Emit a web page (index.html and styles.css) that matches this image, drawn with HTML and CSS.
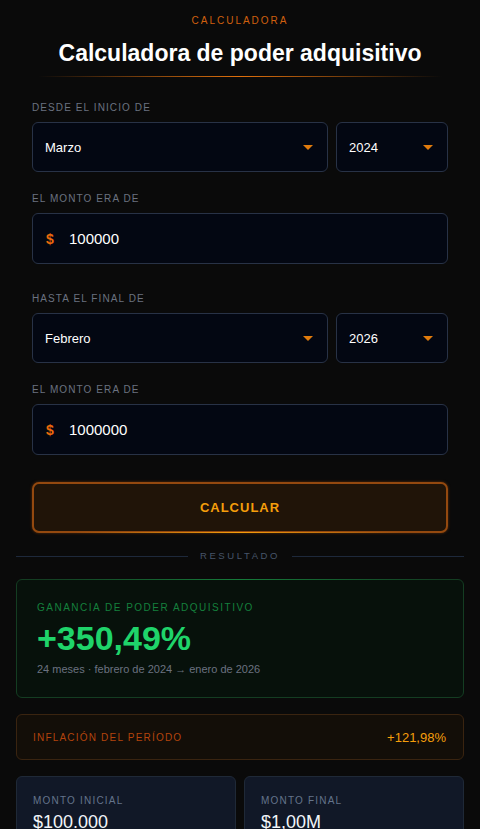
FILE: index.html
```html
<!DOCTYPE html>
<html lang="es">
<head>
  <meta charset="UTF-8">
  <meta name="viewport" content="width=device-width, initial-scale=1">
  <title>Calculadora de poder adquisitivo</title>
  <link rel="stylesheet" href="styles.css">
</head>
<body>
  <div class="page">
    <header class="head">
      <div class="tag">Calculadora</div>
      <h1>Calculadora de poder adquisitivo</h1>
      <div class="head-line"></div>
    </header>

    <form class="calc" onsubmit="return false">
      <div class="field">
        <label>Desde el inicio de</label>
        <div class="date-row">
          <div class="select month">
            <select>
              <option>Enero</option><option>Febrero</option><option selected>Marzo</option>
            </select>
          </div>
          <div class="select year">
            <select>
              <option>2023</option><option selected>2024</option><option>2025</option>
            </select>
          </div>
        </div>
      </div>
      <div class="field">
        <label>El monto era de</label>
        <div class="money">
          <span class="cur">$</span>
          <input type="text" value="100000">
        </div>
      </div>

      <div class="field section">
        <label>Hasta el final de</label>
        <div class="date-row">
          <div class="select month">
            <select>
              <option>Enero</option><option selected>Febrero</option><option>Marzo</option>
            </select>
          </div>
          <div class="select year">
            <select>
              <option>2025</option><option selected>2026</option>
            </select>
          </div>
        </div>
      </div>
      <div class="field">
        <label>El monto era de</label>
        <div class="money">
          <span class="cur">$</span>
          <input type="text" value="1000000">
        </div>
      </div>

      <button class="btn-calc" type="button">Calcular</button>
    </form>

    <div class="divider"><span>Resultado</span></div>

    <section class="results">
      <div class="card gain">
        <div class="gain-label">Ganancia de poder adquisitivo</div>
        <div class="gain-value">+350,49%</div>
        <div class="gain-sub">24 meses · febrero de 2024 → enero de 2026</div>
      </div>

      <div class="card infl">
        <span class="infl-label">Inflación del período</span>
        <span class="infl-value">+121,98%</span>
      </div>

      <div class="amounts">
        <div class="card amount">
          <div class="amount-label">Monto inicial</div>
          <div class="amount-value">$100.000</div>
        </div>
        <div class="card amount">
          <div class="amount-label">Monto final</div>
          <div class="amount-value">$1,00M</div>
        </div>
      </div>
    </section>
  </div>
</body>
</html>
```

FILE: styles.css
```css
/* base */
body {
  margin: 0;
  background: #0a0a0a;
  color: #f1f5f9;
  font-family: "Liberation Sans", Arial, sans-serif;
}
.page {
  padding: 15px 16px 0;
}

/* cabecera */
.head {
  text-align: center;
}
.tag {
  font-size: 10px;
  line-height: 12px;
  letter-spacing: 2px;
  text-transform: uppercase;
  color: #d0600e;
}
.head h1 {
  margin: 12px 0 0;
  font-size: 23px;
  line-height: 28px;
  font-weight: bold;
  color: #fff;
}
.head-line {
  height: 1px;
  margin: 9px 22px 0;
  background: linear-gradient(90deg, transparent, #e0700c 50%, transparent);
}

/* formulario */
.calc {
  padding: 25px 16px 0;
}
.field {
  margin-bottom: 21px;
}
.field.section {
  margin-top: 29px;
}
.field label {
  display: block;
  font-size: 10px;
  line-height: 12px;
  letter-spacing: 1.1px;
  text-transform: uppercase;
  color: #6b7280;
  margin-bottom: 8px;
}
.date-row {
  display: flex;
  gap: 8px;
}
.select {
  position: relative;
}
.select.month { flex: 1; }
.select.year { width: 112px; }
.select::after {
  content: "";
  position: absolute;
  right: 15px;
  top: 23px;
  border-left: 5px solid transparent;
  border-right: 5px solid transparent;
  border-top: 5px solid #e07b0c;
}
.select select {
  appearance: none;
  -webkit-appearance: none;
  width: 100%;
  height: 50px;
  padding: 0 12px;
  background: #030712;
  border: 1px solid #283246;
  border-radius: 6px;
  color: #fff;
  font-family: inherit;
  font-size: 13px;
}
.money {
  display: flex;
  align-items: center;
  height: 49px;
  padding: 0 13px;
  background: #030712;
  border: 1px solid #283246;
  border-radius: 6px;
}
.cur {
  color: #ea6a0c;
  font-size: 14px;
  font-weight: bold;
  width: 23px;
}
.money input {
  flex: 1;
  background: none;
  border: none;
  outline: none;
  color: #fff;
  font-family: inherit;
  font-size: 15px;
  padding: 0;
}
.btn-calc {
  position: relative;
  display: block;
  width: 100%;
  height: 51px;
  margin-top: 27px;
  background: #201408;
  border: 2px solid #94490f;
  border-radius: 7px;
  box-shadow: 0 0 3px rgba(180, 83, 9, .5);
  color: #f59e0b;
  font-family: inherit;
  font-size: 13px;
  font-weight: bold;
  letter-spacing: 1px;
  text-transform: uppercase;
}
.btn-calc::after {
  content: "";
  position: absolute;
  left: 10%;
  right: 10%;
  bottom: -2px;
  height: 1px;
  background: linear-gradient(90deg, transparent, #f59e0b 50%, transparent);
}

/* resultado */
.divider {
  display: flex;
  align-items: center;
  gap: 12px;
  margin: 17px 0 17px;
  font-size: 9.5px;
  line-height: 12px;
  letter-spacing: 2.6px;
  text-transform: uppercase;
  color: #475569;
}
.divider::before,
.divider::after {
  content: "";
  flex: 1;
  height: 1px;
  background: #1e293b;
}
.results {
  display: flex;
  flex-direction: column;
  gap: 16px;
}
.card {
  border-radius: 6px;
}
.gain {
  position: relative;
  padding: 22px 20px 21px;
  background: #07110b;
  border: 1px solid #143d22;
}
.gain::before {
  content: "";
  position: absolute;
  top: -1px;
  left: 5%;
  right: 5%;
  height: 1px;
  background: linear-gradient(90deg, transparent, #16a34a 50%, transparent);
  opacity: .6;
}
.gain-label {
  font-size: 10px;
  line-height: 12px;
  letter-spacing: 1.5px;
  text-transform: uppercase;
  color: #15803d;
}
.gain-value {
  margin-top: 5px;
  font-size: 34px;
  line-height: 38px;
  font-weight: bold;
  color: #1fd46a;
}
.gain-sub {
  margin-top: 5px;
  font-size: 11px;
  line-height: 14px;
  color: #6b7280;
}
.infl {
  display: flex;
  justify-content: space-between;
  align-items: center;
  height: 44px;
  padding: 0 17px 0 16px;
  background: #130e08;
  border: 1px solid #3a2410;
}
.infl-label {
  font-size: 10px;
  letter-spacing: 1.2px;
  text-transform: uppercase;
  color: #b4440c;
}
.infl-value {
  font-size: 13px;
  color: #f59e0b;
}
.amounts {
  display: grid;
  grid-template-columns: 1fr 1fr;
  gap: 8px;
}
.amount {
  padding: 18px 16px 16px;
  background: #111827;
  border: 1px solid #1f2937;
}
.amount-label {
  font-size: 10px;
  line-height: 12px;
  letter-spacing: 1.2px;
  text-transform: uppercase;
  color: #64748b;
}
.amount-value {
  margin-top: 4px;
  font-size: 18px;
  line-height: 22px;
  color: #f1f5f9;
}
```
